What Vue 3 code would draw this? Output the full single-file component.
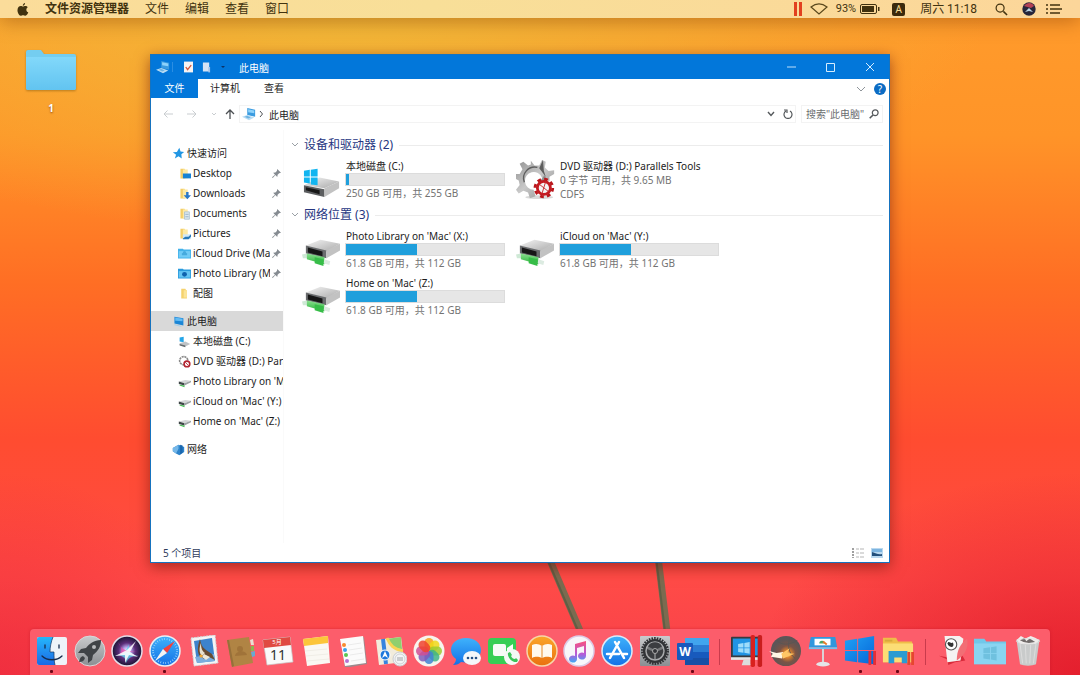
<script setup>
import { ref } from 'vue'

const menus = ['文件', '编辑', '查看', '窗口']

const quickAccess = [
  { label: 'Desktop', icon: 'f-desktop', pinned: true },
  { label: 'Downloads', icon: 'f-down', pinned: true },
  { label: 'Documents', icon: 'f-doc', pinned: true },
  { label: 'Pictures', icon: 'f-pic', pinned: true },
  { label: 'iCloud Drive (Mac)', icon: 'f-cloud', pinned: true },
  { label: 'Photo Library (Mac)', icon: 'f-photo', pinned: true },
  { label: '配图', icon: 'f-plain', pinned: false }
]
const computer = [
  { label: '本地磁盘 (C:)', icon: 'n-disk' },
  { label: 'DVD 驱动器 (D:) Parallels Tools', icon: 'n-dvd' },
  { label: "Photo Library on 'Mac' (X:)", icon: 'n-net' },
  { label: "iCloud on 'Mac' (Y:)", icon: 'n-net' },
  { label: "Home on 'Mac' (Z:)", icon: 'n-net' }
]
const navGroups = [
  { label: '快速访问', icon: 'n-star', children: quickAccess },
  { label: '此电脑', icon: 'n-pc', children: computer, current: true },
  { label: '网络', icon: 'n-network', children: [] }
]

const sections = [
  {
    title: '设备和驱动器 (2)',
    items: [
      { name: '本地磁盘 (C:)', icon: 'd-disk', used: 2, lines: ['250 GB 可用，共 255 GB'] },
      { name: 'DVD 驱动器 (D:) Parallels Tools', icon: 'd-dvd', used: null, lines: ['0 字节 可用，共 9.65 MB', 'CDFS'] }
    ]
  },
  {
    title: '网络位置 (3)',
    items: [
      { name: "Photo Library on 'Mac' (X:)", icon: 'd-net', used: 45, lines: ['61.8 GB 可用，共 112 GB'] },
      { name: "iCloud on 'Mac' (Y:)", icon: 'd-net', used: 45, lines: ['61.8 GB 可用，共 112 GB'] },
      { name: "Home on 'Mac' (Z:)", icon: 'd-net', used: 45, lines: ['61.8 GB 可用，共 112 GB'] }
    ]
  }
]

const glyphs = {
  calendar: [
    { t: '5月', x: 15, y: 9, size: 6, fill: '#ffffff', weight: 400 },
    { t: '11', x: 16, y: 25, size: 14, fill: '#333333', weight: 400 }
  ],
  word: [{ t: 'W', x: 8, y: 21, size: 12, fill: '#ffffff', weight: 700 }]
}
const dock = [
  ['finder', 'Finder', true], ['launch', 'Launchpad'], ['siri', 'Siri'], ['safari', 'Safari', true],
  ['mail', 'Mail'], ['contacts', 'Contacts'], ['calendar', 'Calendar'], ['notes', 'Notes'],
  ['reminders', 'Reminders'], ['maps', 'Maps'], ['photos', 'Photos'], ['messages', 'Messages'],
  ['facetime', 'FaceTime'], ['books', 'Books'], ['music', 'iTunes'], ['store', 'App Store'],
  ['settings', 'Preferences'], ['word', 'Word', true], null,
  ['parallels', 'Parallels'], ['ball', 'Game'], ['keynote', 'Keynote'], ['windows', 'Windows', true],
  ['explorer', 'Explorer', true], null,
  ['cards', 'Solitaire'], ['winfolder', 'Folder'], ['trash', 'Trash']
].map((d) => (d ? { id: 'k-' + d[0], name: d[1], running: !!d[2], glyphs: glyphs[d[0]] || [] } : null))

const petals = ['#f9a01b', '#f0d818', '#9ccb2f', '#3fb585', '#3f83d2', '#7f5bbb', '#cf4f94', '#f0432f']
const query = ref('')
</script>

<template>
  <div class="desktop">
    <svg class="sprite" aria-hidden="true">
      <defs>
        <linearGradient id="g-fold" x2="0" y2="1"><stop offset="0" stop-color="#82d8fa" /><stop offset="1" stop-color="#62c4f0" /></linearGradient>
        <linearGradient id="g-metal" x2="1" y2="1"><stop offset="0" stop-color="#f4f4f4" /><stop offset="1" stop-color="#a9a9a9" /></linearGradient>
        <linearGradient id="g-green" x2="0" y2="1"><stop offset="0" stop-color="#8be08f" /><stop offset="1" stop-color="#2bb33c" /></linearGradient>
        <linearGradient id="g-blue" x2="0" y2="1"><stop offset="0" stop-color="#3fb2fb" /><stop offset="1" stop-color="#1371e6" /></linearGradient>
        <linearGradient id="g-finder" x2="0" y2="1"><stop offset="0" stop-color="#25b7fb" /><stop offset="1" stop-color="#1b69e5" /></linearGradient>
        <linearGradient id="g-orange" x2="0" y2="1"><stop offset="0" stop-color="#fba629" /><stop offset="1" stop-color="#e9700f" /></linearGradient>
        <linearGradient id="g-note" x2="0" y2="1"><stop offset="0" stop-color="#f9517d" /><stop offset=".6" stop-color="#b65bd8" /><stop offset="1" stop-color="#3fa8f4" /></linearGradient>
        <linearGradient id="g-win" x2="1" y2="1"><stop offset="0" stop-color="#20a2f5" /><stop offset="1" stop-color="#0666d8" /></linearGradient>
        <radialGradient id="g-siri"><stop offset="0" stop-color="#ffffff" /><stop offset=".25" stop-color="#b9a6ee" /><stop offset=".55" stop-color="#5b2c78" /><stop offset="1" stop-color="#171330" /></radialGradient>
        <radialGradient id="g-ball" cx=".55" cy=".6"><stop offset="0" stop-color="#ffe08a" /><stop offset=".25" stop-color="#d8812e" /><stop offset=".55" stop-color="#7b5446" /><stop offset="1" stop-color="#5c5557" /></radialGradient>
        <linearGradient id="g-silver" x2="0" y2="1"><stop offset="0" stop-color="#c9cbcd" /><stop offset="1" stop-color="#8b8e92" /></linearGradient>
        <linearGradient id="g-gear" x2="1" y2="1"><stop offset="0" stop-color="#8d8d8d" /><stop offset=".5" stop-color="#c9c9c9" /><stop offset="1" stop-color="#8a8a8a" /></linearGradient>
      </defs>

      <symbol id="pc" viewBox="0 0 16 16">
        <path d="M6 1l9 2v8L6 9z" fill="#3a9be0" /><path d="M7 2.500l7 1.500v3L7 6z" fill="#8dd2fb" />
        <path d="M0 11l6-2 8 3-6 3z" fill="#b9dcf3" /><path d="M3 11l3-1 4 2-3 1z" fill="#6fb4e2" />
      </symbol>
      <symbol id="pin" viewBox="0 0 12 12"><path d="M7 0l5 5-2.500.5-2 2L7 10.500 4.500 8 1 12 0 11l4-3.500L1.500 5l3-.5 2-2z" fill="#858b91" /></symbol>
      <symbol id="n-star" viewBox="0 0 16 16"><path d="M9 1l1.500 4.500L15 6l-3.500 3L12 14 8 11.500 3.500 14 5 9.500 1 6.500l5-.5z" fill="#2196e3" /></symbol>
      <symbol id="n-pc" viewBox="0 0 16 16"><path d="M3 2l11 2v9L3 10.500z" fill="#1b86d6" /><path d="M4 3l9 1.700v3L4 7z" fill="#62bbf4" /><path d="M3 11l9 2.500-1 1L3 12.500z" fill="#a9cfe8" /></symbol>
      <symbol id="n-network" viewBox="0 0 16 16"><path d="M1 6l7-4 7 3v6l-6 4-4-2-4-3z" fill="#2d84cc" /><path d="M1 6l7-4 0 5-3 6-4-3z" fill="#75b7e8" /><path d="M10 2l3 1v9l-3 2z" fill="#1b66ad" /></symbol>
      <symbol id="fold" viewBox="0 0 16 16"><path d="M3 2h5l1 2v10H3z" fill="#f4cf69" /><path d="M6 3h6v11H6z" fill="#fde9a5" /></symbol>
      <symbol id="f-plain" viewBox="0 0 16 16"><path d="M4 2h5l1 2h1v10H4z" fill="#f5d26e" /><path d="M7 4h4v9H7z" fill="#fbe499" /></symbol>
      <symbol id="f-desktop" viewBox="0 0 16 16"><use href="#fold" /><path d="M6 8h10v6H6z" fill="#1682d4" /></symbol>
      <symbol id="f-down" viewBox="0 0 16 16"><use href="#fold" /><path d="M10 6h3v4h3l-4.500 5L7 10h3z" fill="#2977c9" /></symbol>
      <symbol id="f-doc" viewBox="0 0 16 16"><use href="#fold" /><path d="M8 6h6v9H8z" fill="#dbe8f1" stroke="#a9c0d0" /><path d="M9 9h4M9 12h4" stroke="#8fabbf" /></symbol>
      <symbol id="f-pic" viewBox="0 0 16 16"><use href="#fold" /><path d="M6 9h10v6H6z" fill="#cfe7f7" /><path d="M6 14l3-2 4 0 3-3v3l-3 3H6z" fill="#2878b8" /></symbol>
      <symbol id="f-cloud" viewBox="0 0 16 16"><path d="M0 2h6l1 1h9v11H0z" fill="#43b2ea" /><path d="M1 5h14v8H1z" fill="#71cbf6" /><path d="M5 10h6a2 2 0 0 0-1-3 2 2 0 0 0-4 0 2 2 0 0 0-1 3z" fill="#46aade" /></symbol>
      <symbol id="f-photo" viewBox="0 0 16 16"><path d="M0 2h6l1 1h9v11H0z" fill="#2a9bdd" /><path d="M1 5h14v8H1z" fill="#64c4f3" /><circle cx="8" cy="9" r="3" fill="#0e62ae" /></symbol>
      <symbol id="n-disk" viewBox="0 0 16 16"><path d="M2 3l5-1v7L2 8z" fill="#24a5e8" /><path d="M2 10l7-2 6 3-6 3-7-2z" fill="#bfc3c6" /><path d="M2 11l7 2v2l-7-2z" fill="#666c70" /></symbol>
      <symbol id="n-dvd" viewBox="0 0 16 16"><circle cx="7" cy="7" r="5" fill="none" stroke="#8a8a8a" stroke-width="2" stroke-dasharray="2.600 .8" /><circle cx="11" cy="11" r="3.500" fill="#fff" stroke="#b42430" stroke-width="2" /><path d="M9 9l4 4" stroke="#b42430" /></symbol>
      <symbol id="n-net" viewBox="0 0 16 16"><path d="M1 8l8-2 7 1-8 3z" fill="#d4d6d7" /><path d="M1 8l7 2v3l-7-2z" fill="#3f4648" /><path d="M8 10l8-3v2l-8 4z" fill="#9ca1a3" /><path d="M2 12l6 1v2l-6-2z" fill="#46ba54" /></symbol>

      <symbol id="d-disk" viewBox="0 0 40 40">
        <path d="M2 26l16-8 20 4-15 7z" fill="url(#g-metal)" />
        <path d="M2 26l21 4v8L2 33z" fill="#5c5e60" /><path d="M4 28l14 3v4L4 31z" fill="#171717" /><path d="M23 29l15-7v7l-15 9z" fill="#c2c2c2" />
        <path d="M2 11l6-1v7H2zM9 10l7-1v8H9zM2 18h6v6l-6-1zM9 18h7v8l-7-1z" fill="#12b5f0" />
      </symbol>
      <symbol id="d-net" viewBox="0 0 40 40">
        <path d="M4 16l15-6 20 4-14 8z" fill="url(#g-metal)" /><path d="M4 16l21 5v8L4 24z" fill="#6a6c6e" /><path d="M6 18l15 4v5L6 23z" fill="#161616" /><path d="M25 21l14-7v7l-14 8z" fill="#c2c2c2" />
        <path d="M0 25l5-1 1 5-5 0z" fill="#cfe9d6" /><path d="M5 24l18 4v7L5 30z" fill="url(#g-green)" /><path d="M23 30l6 2-1 4-6-2z" fill="#dcebe1" /><path d="M13 28l9 2v7l-9-3z" fill="#37bd48" />
      </symbol>
      <symbol id="d-dvd" viewBox="0 0 40 44">
        <ellipse cx="24" cy="41" rx="15" ry="2" fill="#d9d9d9" />
        <path d="M15 2l4 5 5 0 3-6 4 2-1 6 4 4 6-1 0 4-5 3 0 5-8-4a9.500 9.500 0 1 0-9 13l2 7-6 2-2-6-5-2-5 3-3-4 4-5-1-5-6-3 1-4 6 0 3-5-3-6 4-2 5 4 3-1z" fill="url(#g-gear)" />
        <path d="M8 25a12 12 0 0 1 14-16" fill="none" stroke="#5f5f5f" stroke-width="1.500" />
        <path d="M28 1l1 12 2 6-7-9z" fill="#5e5e5e" />
        <path d="M24 25l6-8 3 9z" fill="#8e8e8e" />
        <circle cx="29" cy="31" r="7" fill="#f4f4f4" stroke="#c41b22" stroke-width="3" /><circle cx="29" cy="31" r="9.500" fill="none" stroke="#b9161c" stroke-width="3" stroke-dasharray="4 3.460" />
        <path d="M24 27l10 8M31 24l-4 13" stroke="#c9282c" />
      </symbol>

      <symbol id="k-finder" viewBox="0 0 32 32"><rect x="1" y="2" width="30" height="28" rx="2" fill="#eef3f9" /><path d="M3 2h14c-2 5-3 10-3 15h4c0 5 0 9 1 13H3a2 2 0 0 1-2-2V4a2 2 0 0 1 2-2z" fill="url(#g-finder)" /><path d="M17 2c-2 5-3 10-3 15h4c0 5 0 9 1 13" fill="none" stroke="#17345e" stroke-width=".7" /><path d="M9 10v3M23 10v3M6 21c5 5 15 5 20 0" fill="none" stroke="#162c4d" stroke-width="1.300" stroke-linecap="round" /></symbol>
      <symbol id="k-launch" viewBox="0 0 32 32"><circle cx="16" cy="16" r="15" fill="url(#g-silver)" stroke="#d8d8da" /><path d="M27 5c-7 0-12 4-15 8l-5 1-3 4 6 0 4 4 0 6 4-3 1-5c5-4 8-8 8-15z" fill="#3f4347" /><circle cx="20" cy="12" r="2" fill="#b8babc" /><path d="M9 21c-3 1-3 3-4 6 3 0 5-1 6-4z" fill="#3f4347" /></symbol>
      <symbol id="k-siri" viewBox="0 0 32 32"><circle cx="16" cy="16" r="15" fill="url(#g-siri)" stroke="#e3dce8" stroke-width="1.500" /><path d="M3 20c8 1 12-3 15-11-1 8 2 11 10 12-8 0-10 1-13 7 0-6-4-8-12-8z" fill="#57d4e8" opacity=".7" /><path d="M7 7c4 9 9 9 19 10-10 0-14 0-19 4 5-5 4-8 0-14z" fill="#ee4aa8" opacity=".7" /><path d="M4 21l12-6 9-9-6 11 8 5-9-2-4 8 0-8z" fill="#fff" opacity=".85" /></symbol>
      <symbol id="k-safari" viewBox="0 0 32 32"><circle cx="16" cy="16" r="15" fill="url(#g-blue)" stroke="#eceff3" stroke-width="1.500" /><circle cx="16" cy="16" r="12" fill="none" stroke="#a8d8fb" stroke-width="2" stroke-dasharray=".7 1.820" /><path d="M26 6L18 18l-4-4z" fill="#f2413c" /><path d="M6 26l8-12 4 4z" fill="#f4f4f4" /></symbol>
      <symbol id="k-mail" viewBox="0 0 32 32"><path d="M4 3l24-3 3 28-24 3z" fill="#f4f5f6" stroke="#d2d5d8" stroke-dasharray="2 1" /><path d="M7 6l18-3 3 23-18 2z" fill="#3d83cc" /><path d="M8 22l19-3 1 7-18 2z" fill="#7aaddd" /><path d="M13 4c1 5 2 8 6 11l6 4 3 6-6-3-5 2-5-4c-2-5-1-10 1-16z" fill="#6a4d32" /><path d="M14 8c0 5 1 8 4 10l-3 3c-3-3-3-8-1-13z" fill="#e9e2cf" /><path d="M17 19l6 3-4 3-4-3z" fill="#f0ead9" /><circle cx="14" cy="21" r="1.500" fill="#f2a72e" /></symbol>
      <symbol id="k-contacts" viewBox="0 0 32 32"><path d="M3 5l22-3 4 26-21 4z" fill="#b08444" /><path d="M3 5l2 0 5 26-2 1z" fill="#96703a" /><path d="M26 5l3-1 1 6-3 0z" fill="#e9e1d2" /><path d="M27 11l3 0 0 5-3 0z" fill="#8cb551" /><path d="M27 17l4-1 0 5-3 1z" fill="#6aa8cf" /><circle cx="16" cy="14" r="3" fill="#a07339" /><path d="M11 21c1-6 11-6 12-1z" fill="#a07339" /></symbol>
      <symbol id="k-calendar" viewBox="0 0 32 32"><path d="M1 5l27-3 3 25-26 3z" fill="#fafafa" stroke="#c5c5c5" stroke-width=".7" /><path d="M1 5l27-3 1 8-27 3z" fill="#e04a42" /></symbol>
      <symbol id="k-notes" viewBox="0 0 32 32"><path d="M3 4l25-3 2 27-23 3z" fill="#faf8f3" /><path d="M3 4l25-3 0 7-24 3z" fill="#fcc53a" /><path d="M5 16l22-2M6 21l22-2M7 26l22-2" stroke="#ebe8e0" stroke-width=".7" /></symbol>
      <symbol id="k-reminders" viewBox="0 0 32 32"><path d="M4 5l23-3 3 27-22 4z" fill="#9b8a8d" /><path d="M3 4l23-3 3 27-21 3z" fill="#fbfbfb" /><circle cx="7" cy="10" r="2" fill="#f78a2f" /><circle cx="8" cy="15" r="2" fill="#3aa0ee" /><circle cx="9" cy="20" r="2" fill="#59c653" /><circle cx="10" cy="26" r="2" fill="#b572d4" /><path d="M11 10l13-2M12 15l13-2M13 20l13-2M14 26l13-2" stroke="#e6e6e6" stroke-width=".8" /></symbol>
      <symbol id="k-maps" viewBox="0 0 32 32"><path d="M1 5l25-3 3 25-25 3z" fill="#f2ecdc" /><path d="M11 4l15-2 1 12c-8 0-11-4-16-10z" fill="#8fcf6e" /><path d="M12 3c3 7 6 11 16 13" stroke="#f8d454" stroke-width="3" fill="none" /><path d="M8 4l3 25" stroke="#3683df" stroke-width="4" /><circle cx="10" cy="20" r="5" fill="#1f78db" stroke="#fff" /><path d="M10 16l3 7-3-2-3 2z" fill="#fff" /><circle cx="25" cy="24" r="7" fill="#f3f4f5" stroke="#c9ccd0" /><circle cx="25" cy="24" r="5" fill="none" stroke="#b6babf" stroke-width=".6" /><path d="M22 23h6M22 25h6" stroke="#8b8f94" stroke-width=".8" /></symbol>
      <symbol id="k-photos" viewBox="0 0 32 32"><circle cx="16" cy="16" r="15.500" fill="#f7f4ee" /><rect v-for="(c, i) in petals" :key="c" x="11.500" y="3" width="9" height="13" rx="4.500" :fill="c" opacity=".85" :transform="`rotate(${i * 45} 16 16)`" /></symbol>
      <symbol id="k-messages" viewBox="0 0 32 32"><path d="M16 3C7 3 1 8 1 15c0 4 2 7 5 9 0 2-1 4-3 6 4 0 6-1 8-3 12 2 20-4 20-12C31 8 25 3 16 3z" fill="url(#g-blue)" /><ellipse cx="22" cy="23" rx="9" ry="7" fill="#f5f7fa" /><circle cx="18" cy="23" r="1.300" fill="#245086" /><circle cx="22" cy="23" r="1.300" fill="#245086" /><circle cx="26" cy="23" r="1.300" fill="#245086" /></symbol>
      <symbol id="k-facetime" viewBox="0 0 32 32"><rect x="0" y="3" width="28" height="26" rx="4" fill="#36ce54" /><rect x="5" y="9" width="13" height="12" rx="2" fill="#f6fbf6" /><path d="M19 13l6-4v12l-6-4z" fill="#f6fbf6" /><circle cx="24" cy="22" r="8" fill="#f4f8f4" /><path d="M20 18l2-1 2 3-1 1c1 2 2 3 4 3l1-1 2 2-1 2c-5 1-10-5-9-9z" fill="#3ac457" /></symbol>
      <symbol id="k-books" viewBox="0 0 32 32"><circle cx="16" cy="16" r="15" fill="url(#g-orange)" stroke="#f7d6a9" stroke-width="1.500" /><path d="M6 10c4-2 7-1 10 1 3-2 6-3 10-1v13c-4-2-7-1-10 0-3-1-6-2-10 0z" fill="#fff9ee" /><path d="M16 11v12" stroke="#e58a24" /></symbol>
      <symbol id="k-music" viewBox="0 0 32 32"><circle cx="16" cy="16" r="15" fill="#f8f6fa" stroke="#dccbe6" stroke-width="1.500" /><path d="M12 9l11-3v15a4 3.500 0 1 1-2-3v-7l-7 2v11a4 3.500 0 1 1-2-3z" fill="url(#g-note)" /></symbol>
      <symbol id="k-store" viewBox="0 0 32 32"><circle cx="16" cy="16" r="15" fill="url(#g-blue)" stroke="#dcebf8" stroke-width="1.500" /><path d="M18 7L9 23M14 7l9 16M6 19h12M21 19h5" stroke="#fff" stroke-width="2.500" stroke-linecap="round" /></symbol>
      <symbol id="k-settings" viewBox="0 0 32 32"><rect x="1" y="1" width="30" height="30" rx="1" fill="url(#g-silver)" /><circle cx="16" cy="16" r="12.500" fill="none" stroke="#313336" stroke-width="3" stroke-dasharray="1.600 1.020" /><circle cx="16" cy="16" r="12" fill="#313336" /><circle cx="16" cy="16" r="9" fill="#77797b" stroke="#a8aaac" stroke-width="1.500" /><path d="M16 15L9 11.500A8 8 0 0 1 23 11.500zM15 17v7a8 8 0 0 1-7-10zM17 17v7a8 8 0 0 0 7-10z" fill="#3b3d40" /><circle cx="16" cy="16" r="2.500" fill="#313336" stroke="#aaa" /></symbol>
      <symbol id="k-word" viewBox="0 0 32 32"><rect x="8" y="3" width="24" height="27" rx="1" fill="#2b7cd3" /><path d="M8 3h24v7H8z" fill="#41a5ee" /><path d="M8 17h24v6H8z" fill="#185abd" /><path d="M8 23h24v7H8z" fill="#174fa6" /><rect x="0" y="8" width="16" height="17" rx="1" fill="#185abd" /></symbol>
      <symbol id="k-parallels" viewBox="0 0 36 36"><rect x="0" y="2" width="34" height="24" rx="1" fill="#383b40" /><rect x="2" y="4" width="30" height="19" fill="#2194e4" /><path d="M8 10l6-1v5H8zM15 9l6-1v6h-6zM8 15h6v5l-6-1zM15 15h6v6l-6-1z" fill="#9edcfa" /><path d="M0 25h34v3H0z" fill="#e7e7e7" /><path d="M14 28h8v5h4v1H12z" fill="#dcdcdc" /><rect x="22" y="0" width="5" height="36" rx="2" fill="#d9211e" /><rect x="30" y="0" width="5" height="36" rx="2" fill="#c91e1d" /></symbol>
      <symbol id="k-ball" viewBox="0 0 34 34"><circle cx="18" cy="17" r="16" fill="url(#g-ball)" /><path d="M8 6c6 5 12 5 22 0M22 2c-2 9-2 17 6 23" fill="none" stroke="#5a5553" /><path d="M0 17l8 2 7-1-1 7-12-2 2-3z" fill="#fff7e4" /><path d="M13 20l9-6-3 5 8 1-12 5z" fill="#ffc765" /></symbol>
      <symbol id="k-keynote" viewBox="0 0 32 34"><path d="M3 2h26l2 11H1z" fill="#3097dd" /><path d="M1 13h30v2H1z" fill="#74c3ef" /><path d="M7 4h17v7H7z" fill="#fff" /><path d="M12 9a3 3 0 1 1 6 0" fill="#4aa564" /><path d="M16 7l4 3" stroke="#e9792c" stroke-width="2" /><path d="M15 15h2v15h-2z" fill="#d9dadd" /><ellipse cx="16" cy="31" rx="7" ry="2.500" fill="#e5e5e8" /></symbol>
      <symbol id="k-windows" viewBox="0 0 34 34"><path d="M1 6l13-2v12H1zM15 4l17-3v15H15zM1 17h13v12L1 27zM15 17h17v14l-17-2z" fill="url(#g-win)" /><path d="M26 17h3v15h-3zM31 17h3v15h-3z" fill="#e62d36" /></symbol>
      <symbol id="k-explorer" viewBox="0 0 34 34"><path d="M1 3h14l2 4h15v22H1z" fill="#f0bd48" /><path d="M1 9h32v20H1z" fill="#fcdd75" /><path d="M3 5h8v2H3z" fill="#d8a83c" /><path d="M7 17h20v13h-6v-6h-8v6H7z" fill="#2b9bd2" /><path d="M27 18h3v14h-3zM31 18h3v14h-3z" fill="#e6462f" /></symbol>
      <symbol id="k-cards" viewBox="0 0 32 34"><path d="M1 22l10 2 15-2 3 5-11 2-7 3-1-6z" fill="#d82a3a" /><path d="M7 1h16l4 3-3 23-14 2z" fill="#f5f3f2" /><circle cx="14" cy="10" r="6" fill="#fff" stroke="#555" stroke-width="1.200" /><path d="M10 9c2-4 3 1 6-1 2 5-2 6-5 3z" fill="#333" /><path d="M31 4c2 10-3 18-11 23 0-11 4-18 11-23z" fill="#f26e75" /></symbol>
      <symbol id="k-winfolder" viewBox="0 0 34 32"><path d="M0 3h11l2 3h21v24H0z" fill="#71c7e9" /><path d="M0 8h34v22H0z" fill="#8ad4f1" /><path d="M10 13l7-1v6h-7zM18 12l6-1v7h-6zM10 19h7v6l-7-1zM18 19h6v7l-6-1z" fill="#6fc1df" /></symbol>
      <symbol id="k-trash" viewBox="0 0 32 36"><path d="M3 5h26l-4 28c-4 2-14 2-18 0z" fill="#c9cbcb" /><path d="M7 10l3 22M13 11l1 21M19 11l-1 21M25 10l-3 22" stroke="#dedede" /><path d="M3 6l5-5 5 3 6-3 5 2 5 3-5 4H8z" fill="#f0eeec" /><path d="M7 6l5-3 2 4 4-3 6 4-7 1-6-1z" fill="#716c6b" /><ellipse cx="16" cy="7" rx="13" ry="3" fill="none" stroke="#e2e2e2" /></symbol>
    </svg>

    <svg class="stalks" viewBox="0 0 1080 675" preserveAspectRatio="xMidYMax slice" aria-hidden="true">
      <path d="M520 490L584 640M650 490l18 150" stroke="#7b6b50" stroke-width="7" />
      <path d="M518 490L582 640M648 490l18 150" stroke="#5f5f45" stroke-width="2" />
    </svg>

    <header class="menubar">
      <svg class="apple" viewBox="0 0 14 16" aria-hidden="true"><path d="M9.500 0c.2 1.500-1 3.200-2.700 3.400C6.600 1.800 8 .3 9.500 0zM7 4.300c.8 0 1.500-.7 2.900-.7 1.200 0 2.300.6 3 1.600-2.700 1.600-2.200 5.200.6 6.300-.6 1.800-2 4.200-3.500 4.200-1 0-1.500-.7-2.900-.7s-1.900.7-2.900.7C2 15.700.2 11.900.2 9c0-3.400 2-5.300 4.100-5.300 1.200 0 1.900.6 2.700.6z" fill="#41320f" /></svg>
      <nav class="menus">
        <button class="menu app">文件资源管理器</button>
        <button v-for="m in menus" :key="m" class="menu">{{ m }}</button>
      </nav>
      <div class="tray">
        <svg width="8" height="14" viewBox="0 0 8 14" aria-hidden="true"><path d="M0 0h3v14H0zM5 0h3v14H5z" fill="#e2401f" /></svg>
        <svg class="wifi" viewBox="0 0 18 12" aria-hidden="true"><path d="M1 4c5-4 11-4 16 0L9 11z" fill="none" stroke="#5a481c" stroke-width="1.200" /></svg>
        <span class="pct">93%</span>
        <svg class="battery" viewBox="0 0 20 10" aria-hidden="true"><rect x=".5" y=".5" width="16" height="9" rx="1.500" fill="none" stroke="#41320f" /><path d="M2 2h12v6H2zM18 3h1.500v4H18z" fill="#41320f" /></svg>
        <span class="ime">A</span>
        <time class="clock">周六 11:18</time>
        <svg class="spot" viewBox="0 0 14 14" aria-hidden="true"><circle cx="5.500" cy="5.500" r="4.300" fill="none" stroke="#41320f" stroke-width="1.300" /><path d="M9 9l4 4" stroke="#41320f" stroke-width="1.600" /></svg>
        <svg class="siri" viewBox="0 0 14 14" aria-hidden="true"><circle cx="7" cy="7" r="6.700" fill="#27263a" /><path d="M2 4c3-4 8-4 10 0L9 6z" fill="#b44156" /><path d="M3 10l4-4 4 4-4-1z" fill="#bcd6e6" /></svg>
        <svg class="list" viewBox="0 0 16 10" aria-hidden="true"><path d="M0 1h2M4 1h10M0 5h2M4 5h12M0 9h2M4 9h10" stroke="#41320f" stroke-width="1.500" /></svg>
      </div>
    </header>

    <main class="space">
      <button class="folder">
        <svg viewBox="0 0 50 40" aria-hidden="true"><path d="M0 2q0-2 2-2h13l3 4h30q2 0 2 2v32q0 2-2 2H2q-2 0-2-2z" fill="#74cdf0" /><path d="M0 7h50v31q0 2-2 2H2q-2 0-2-2z" fill="url(#g-fold)" /></svg>
        <span>1</span>
      </button>
    </main>

    <section class="window" aria-label="此电脑">
      <header class="titlebar">
        <svg class="i16" aria-hidden="true"><use href="#pc" /></svg>
        <i class="tick"></i>
        <svg class="quick" viewBox="0 0 10 12" aria-hidden="true"><path d="M0 0h10v12H0z" fill="#f7f3f2" /><path d="M2 6l2 3 4-5" fill="none" stroke="#d4553b" stroke-width="1.500" /></svg>
        <svg class="quick" viewBox="0 0 10 12" aria-hidden="true"><path d="M1 1h7v10H1z" fill="#d5e3f5" /><path d="M7 6h2v6H7z" fill="#a5c4ea" /></svg>
        <svg class="drop" viewBox="0 0 6 4" aria-hidden="true"><path d="M1 1h4L3 3z" fill="#0b3266" /></svg>
        <h1>此电脑</h1>
        <div class="controls">
          <button aria-label="最小化"><svg viewBox="0 0 10 10"><path d="M0 5h9" stroke="#bfe0fa" /></svg></button>
          <button aria-label="最大化"><svg viewBox="0 0 10 10"><path d="M.5 1.500h8v8h-8z" fill="none" stroke="#d5ecfd" /></svg></button>
          <button aria-label="关闭"><svg viewBox="0 0 10 10"><path d="M1 1l8 8M9 1l-8 8" stroke="#d5ecfd" /></svg></button>
        </div>
      </header>

      <div class="tabs">
        <button class="tab file">文件</button>
        <button class="tab">计算机</button>
        <button class="tab">查看</button>
        <svg class="expand" viewBox="0 0 10 6" aria-hidden="true"><path d="M1 1l4 4 4-4" fill="none" stroke="#8f959a" /></svg>
        <button class="help" aria-label="帮助">?</button>
      </div>

      <div class="address">
        <button class="arrow" aria-label="后退"><svg viewBox="0 0 10 10"><path d="M10 5H1M4.500 1.500L1 5l3.500 3.500" fill="none" stroke="#c9cdd0" /></svg></button>
        <button class="arrow" aria-label="前进"><svg viewBox="0 0 10 10"><path d="M0 5h9M5.500 1.500L9 5 5.500 8.500" fill="none" stroke="#c9cdd0" /></svg></button>
        <svg class="small" viewBox="0 0 6 6" aria-hidden="true"><path d="M1 2l2 2 2-2" fill="none" stroke="#c9cdd0" /></svg>
        <button class="arrow up" aria-label="向上"><svg viewBox="0 0 10 10"><path d="M5 10V1M1 5l4-4 4 4" fill="none" stroke="#4d5154" stroke-width="1.300" /></svg></button>
        <div class="path">
          <svg class="i16" aria-hidden="true"><use href="#pc" /></svg>
          <svg class="small" viewBox="0 0 6 6" aria-hidden="true"><path d="M2 0l2.500 3L2 6" fill="none" stroke="#4d5154" /></svg>
          <span>此电脑</span>
          <svg class="chev" viewBox="0 0 8 6" aria-hidden="true"><path d="M1 1l3 3.500L7 1" fill="none" stroke="#55595c" stroke-width="1.400" /></svg>
          <button class="arrow" aria-label="刷新"><svg viewBox="0 0 10 10"><path d="M3 2a4 4 0 1 0 4 0M1 1h3v3" fill="none" stroke="#55595c" stroke-width="1.200" /></svg></button>
        </div>
        <label class="search">
          <input v-model="query" type="text" placeholder="搜索&quot;此电脑&quot;" aria-label="搜索" />
          <svg viewBox="0 0 10 10" aria-hidden="true"><circle cx="6.200" cy="3.800" r="2.900" fill="none" stroke="#55595c" stroke-width="1.200" /><path d="M4 6L.7 9.300" stroke="#55595c" stroke-width="1.600" /></svg>
        </label>
      </div>

      <div class="body">
        <nav class="side">
          <ul v-for="g in navGroups" :key="g.label">
            <li><a href="#" :class="{ current: g.current }"><svg class="i12" aria-hidden="true"><use :href="'#' + g.icon" /></svg><span>{{ g.label }}</span></a></li>
            <li v-for="c in g.children" :key="c.label">
              <a href="#" class="child" :class="{ pinned: c.pinned }"><svg class="i12" aria-hidden="true"><use :href="'#' + c.icon" /></svg><span>{{ c.label }}</span><svg v-if="c.pinned" class="pin" aria-hidden="true"><use href="#pin" /></svg></a>
            </li>
          </ul>
        </nav>
        <div class="content">
          <section v-for="s in sections" :key="s.title" class="group">
            <h2><svg class="fold" viewBox="0 0 8 6" aria-hidden="true"><path d="M1 1l3 3 3-3" fill="none" stroke="#9aa0a5" /></svg>{{ s.title }}</h2>
            <div class="tiles">
              <article v-for="t in s.items" :key="t.name" class="tile">
                <svg class="drive" aria-hidden="true"><use :href="'#' + t.icon" /></svg>
                <div class="info">
                  <h3>{{ t.name }}</h3>
                  <div v-if="t.used !== null" class="bar"><div class="fill" :style="{ width: t.used + '%' }"></div></div>
                  <p v-for="l in t.lines" :key="l">{{ l }}</p>
                </div>
              </article>
            </div>
          </section>
        </div>
      </div>

      <footer class="status">
        <span>5 个项目</span>
        <svg viewBox="0 0 12 10" aria-hidden="true"><path d="M1 0v10" stroke="#a0a0a0" stroke-width="2" stroke-dasharray="2 1" /><path d="M4 1h3M8 1h4M4 5h3M8 5h4M4 9h3M8 9h4" stroke="#b5b5b5" /></svg>
        <svg viewBox="0 0 12 10" aria-hidden="true"><path d="M0 0h12v10H0z" fill="#b9d8ef" /><path d="M1 1h10v3H1z" fill="#7cb4e0" /><path d="M1 4c4 1 6 3 10 2v2H1z" fill="#24507c" /></svg>
      </footer>
    </section>

    <footer class="dock">
      <template v-for="(d, i) in dock" :key="i">
        <button v-if="d" class="app-icon" :aria-label="d.name">
          <svg viewBox="0 0 32 32" aria-hidden="true">
            <use :href="'#' + d.id" />
            <text v-for="g in d.glyphs" :key="g.t" :x="g.x" :y="g.y" :font-size="g.size" :fill="g.fill" :font-weight="g.weight" text-anchor="middle">{{ g.t }}</text>
          </svg>
          <i v-if="d.running"></i>
        </button>
        <hr v-else />
      </template>
    </footer>
  </div>
</template>

<style>
body {
  background: #f8404a;
}
</style>

<style scoped>
* {
  box-sizing: border-box;
}
.desktop {
  position: relative;
  display: flex;
  flex-direction: column;
  min-height: 100vh;
  overflow: hidden;
  font-family: "Noto Sans", "Noto Sans CJK SC", sans-serif;
  font-size: 10px;
  color: #1c1c1c;
  background:
    radial-gradient(ellipse 60% 35% at 32% 0, rgba(240, 188, 58, 0.95), rgba(246, 176, 50, 0)),
    radial-gradient(ellipse 30% 30% at 100% 100%, rgba(222, 20, 36, 0.75), rgba(230, 30, 40, 0)),
    radial-gradient(ellipse 20% 30% at 0 100%, rgba(235, 35, 55, 0.6), rgba(240, 40, 50, 0)),
    linear-gradient(#ff9c2c 0, #ff9428 20%, #ff6e24 42%, #ff4c30 65%, #ff4b47 86%, #f7404b 100%);
}
button {
  border: 0;
  padding: 0;
  background: none;
  color: inherit;
  font: inherit;
}
h1, h2, h3, p, ul {
  margin: 0;
  padding: 0;
  font-weight: 400;
  list-style: none;
}
.sprite {
  position: absolute;
  width: 0;
  height: 0;
}
.stalks {
  position: absolute;
  inset: 0;
  width: 100%;
  height: 100%;
}
.menubar {
  position: relative;
  display: flex;
  align-items: center;
  height: 18px;
  padding: 0 18px 0 17px;
  color: #41320f;
  font-size: 12px;
  line-height: 18px;
  background: linear-gradient(90deg, #fbdc9a, #f8df98 40%, #fcd69a);
  box-shadow: 0 2px 20px rgba(120, 50, 0, 0.5);
}
.apple {
  width: 12px;
  height: 13px;
  margin-right: 16px;
}
.menus {
  display: flex;
  gap: 16px;
}
.menu {
  white-space: nowrap;
}
.app {
  font-weight: 700;
}
.tray {
  display: flex;
  align-items: center;
  margin-left: auto;
}
.wifi {
  width: 18px;
  height: 12px;
  margin: 0 8px;
}
.pct {
  font-family: Roboto, sans-serif;
  font-size: 11px;
}
.battery {
  width: 20px;
  height: 10px;
  margin: 0 12px 0 4px;
}
.ime {
  width: 13px;
  height: 13px;
  margin-right: 15px;
  border-radius: 2px;
  background: #3b2a0c;
  color: #f8df98;
  font-size: 10px;
  line-height: 13px;
  text-align: center;
}
.clock {
  font-family: Roboto, "Noto Sans CJK SC", sans-serif;
}
.spot {
  width: 13px;
  height: 13px;
  margin: 0 14px 0 18px;
}
.siri {
  width: 14px;
  height: 14px;
  margin-right: 10px;
}
.list {
  width: 16px;
  height: 10px;
}
.space {
  position: relative;
  flex: 1;
  padding: 32px 26px;
}
.folder {
  display: flex;
  flex-direction: column;
  align-items: center;
  gap: 11px;
  color: #fff;
  font-weight: 700;
  line-height: 14px;
  text-shadow: 0 1px 2px rgba(90, 30, 0, 0.7);
}
.folder svg {
  width: 50px;
  height: 40px;
  filter: drop-shadow(0 1px 1px rgba(90, 60, 0, 0.4));
}
.window {
  position: absolute;
  top: 54px;
  left: 150px;
  right: 190px;
  display: flex;
  flex-direction: column;
  min-height: 509px;
  border: 1px solid #1673bf;
  background: #fff;
  box-shadow: 0 4px 14px rgba(110, 20, 10, 0.6);
}
.titlebar {
  display: flex;
  align-items: center;
  height: 24px;
  padding-left: 5px;
  background: #0277da;
  color: #fff;
}
.titlebar h1 {
  font-size: 10px;
}
.i16 {
  width: 14px;
  height: 14px;
}
.tick {
  width: 1px;
  height: 10px;
  margin: 0 11px 0 2px;
  background: #2b8ee2;
}
.quick {
  width: 9px;
  height: 12px;
  margin-right: 9px;
}
.drop {
  width: 6px;
  height: 4px;
  margin-right: 13px;
}
.controls {
  display: flex;
  margin-left: auto;
}
.controls button {
  display: grid;
  place-items: center;
  width: 39px;
  height: 24px;
}
.controls svg {
  width: 10px;
  height: 10px;
}
.tabs {
  display: flex;
  align-items: center;
  height: 19px;
  padding-right: 3px;
}
.tab {
  height: 19px;
  padding: 0 12px;
  line-height: 19px;
}
.file {
  width: 47px;
  background: #0277da;
  color: #fff;
}
.expand {
  width: 10px;
  height: 6px;
  margin: 0 8px 0 auto;
}
.help {
  width: 12px;
  height: 12px;
  border-radius: 6px;
  background: #0c6cc4;
  color: #fff;
  line-height: 12px;
  text-align: center;
}
.address {
  display: flex;
  align-items: center;
  height: 32px;
  padding: 0 6px 0 12px;
}
.arrow {
  display: grid;
  place-items: center;
  width: 10px;
  height: 16px;
  margin-right: 14px;
}
.arrow svg {
  width: 10px;
  height: 10px;
}
.small {
  width: 6px;
  height: 6px;
}
.up {
  margin: 0 4px 0 8px;
}
.path {
  display: flex;
  flex: 1;
  align-items: center;
  height: 18px;
  margin-right: 5px;
  padding: 0 2px;
  border: 1px solid #f3f3f3;
}
.path span {
  margin-left: 5px;
}
.path .small {
  margin-left: 2px;
}
.chev {
  width: 8px;
  height: 6px;
  margin: 0 8px 0 auto;
}
.path .arrow {
  margin-right: 0;
}
.search {
  display: flex;
  align-items: center;
  width: 82px;
  height: 18px;
  padding: 0 3px 0 4px;
  border: 1px solid #f3f3f3;
}
.search input {
  flex: 1;
  min-width: 0;
  width: 0;
  padding: 0;
  border: 0;
  outline: 0;
  background: none;
  font: inherit;
}
.search input::placeholder {
  color: #6b6e70;
  opacity: 1;
}
.search svg {
  width: 10px;
  height: 10px;
}
.body {
  display: flex;
  flex: 1;
}
.side {
  width: 133px;
  padding-top: 13px;
  border-right: 1px solid #fafafa;
}
.side ul {
  margin-bottom: 8px;
}
.side a {
  display: flex;
  align-items: center;
  gap: 2px;
  height: 20px;
  padding-left: 21px;
  color: inherit;
  line-height: 20px;
  text-decoration: none;
}
.side .child {
  padding-left: 27px;
}
.side a span {
  flex: 1;
  min-width: 0;
  overflow: hidden;
  white-space: nowrap;
}
.side .pinned {
  padding-right: 2px;
}
.side .current {
  background: #d9d9d9;
}
.i12 {
  flex: none;
  width: 13px;
  height: 13px;
}
.pin {
  flex: none;
  width: 9px;
  height: 9px;
}
.content {
  flex: 1;
  padding: 5px 6px 0 7px;
}
.group {
  margin-bottom: 5px;
}
.group h2 {
  display: flex;
  align-items: center;
  height: 20px;
  color: #26367f;
  font-size: 12px;
  line-height: 20px;
}
.group h2::after {
  content: "";
  flex: 1;
  height: 1px;
  margin-left: 6px;
  background: #ececec;
}
.fold {
  width: 8px;
  height: 6px;
  margin-right: 5px;
}
.tiles {
  display: grid;
  grid-template-columns: repeat(auto-fill, 214px);
  gap: 6px 0;
  padding: 4px 0 0 11px;
}
.tile {
  display: flex;
  gap: 4px;
  height: 41px;
}
.drive {
  flex: none;
  width: 39px;
  height: 41px;
}
.info {
  width: 160px;
  line-height: 14px;
  white-space: nowrap;
}
.info h3 {
  font-size: 10px;
}
.info h3,
.info p {
  padding-left: 1px;
}
.info p {
  color: #737373;
}
.bar {
  height: 13px;
  border: 1px solid #dcdcdc;
  background: #e6e6e6;
}
.fill {
  height: 11px;
  background: #1f9fdc;
}
.status {
  display: flex;
  align-items: center;
  gap: 7px;
  height: 19px;
  padding: 0 6px 0 12px;
  color: #2f3c5c;
}
.status span {
  margin-right: auto;
}
.status svg {
  width: 12px;
  height: 10px;
}
.dock {
  position: relative;
  display: flex;
  height: 46px;
  margin: 0 30px;
  padding: 0 3px;
  border-radius: 4px 4px 0 0;
  background: #fc5d6b;
  box-shadow: 0 0 3px rgba(190, 20, 40, 0.5);
}
.dock hr {
  flex: none;
  width: 1px;
  height: 26px;
  margin: 10px 8px;
  border: 0;
  background: #c93b4c;
}
.app-icon {
  flex: 1;
  display: flex;
  flex-direction: column;
  align-items: center;
  gap: 3px;
  padding-top: 6px;
}
.app-icon svg {
  width: 32px;
  height: 32px;
  overflow: visible;
}
.app-icon i {
  width: 3px;
  height: 3px;
  border-radius: 1px;
  background: #6e0716;
}
</style>
